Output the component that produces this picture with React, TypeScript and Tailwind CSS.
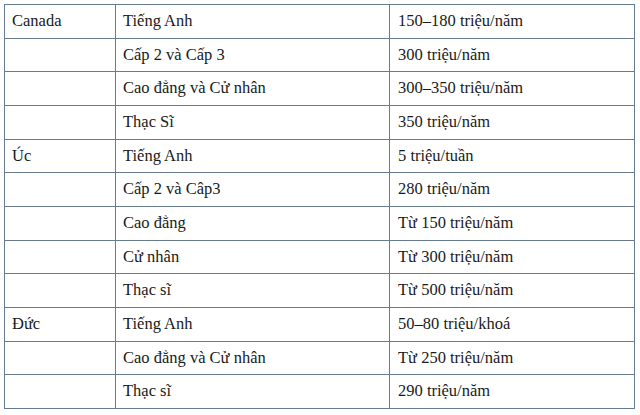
const ROWS: [string, string, string][] = [
  ['Canada', 'Tiếng Anh', '150–180 triệu/năm'],
  ['', 'Cấp 2 và Cấp 3', '300 triệu/năm'],
  ['', 'Cao đẳng và Cử nhân', '300–350 triệu/năm'],
  ['', 'Thạc Sĩ', '350 triệu/năm'],
  ['Úc', 'Tiếng Anh', '5 triệu/tuần'],
  ['', 'Cấp 2 và Câp3', '280 triệu/năm'],
  ['', 'Cao đẳng', 'Từ 150 triệu/năm'],
  ['', 'Cử nhân', 'Từ 300 triệu/năm'],
  ['', 'Thạc sĩ', 'Từ 500 triệu/năm'],
  ['Đức', 'Tiếng Anh', '50–80 triệu/khoá'],
  ['', 'Cao đẳng và Cử nhân', 'Từ 250 triệu/năm'],
  ['', 'Thạc sĩ', '290 triệu/năm'],
]

// font set on the td itself: table cells don't reliably inherit it
const cell = "border-[1.5px] border-[#667a90] align-middle font-['Liberation_Serif',serif] text-[16.5px] text-[#1a1a1a]"

export default function App() {
  return (
    <div className="w-[640px] h-[415px] bg-white p-1">
      <table className="w-[631px] table-fixed border-collapse">
        <colgroup>
          <col className="w-[111px]" />
          <col className="w-[274px]" />
          <col />
        </colgroup>
        <tbody>
          {ROWS.map((r, i) => (
            <tr key={i} className="h-[33.67px]">
              <td className={`${cell} pl-[7px]`}>{r[0]}</td>
              <td className={`${cell} pl-[7px]`}>{r[1]}</td>
              <td className={`${cell} pl-[8px]`}>{r[2]}</td>
            </tr>
          ))}
        </tbody>
      </table>
    </div>
  )
}
